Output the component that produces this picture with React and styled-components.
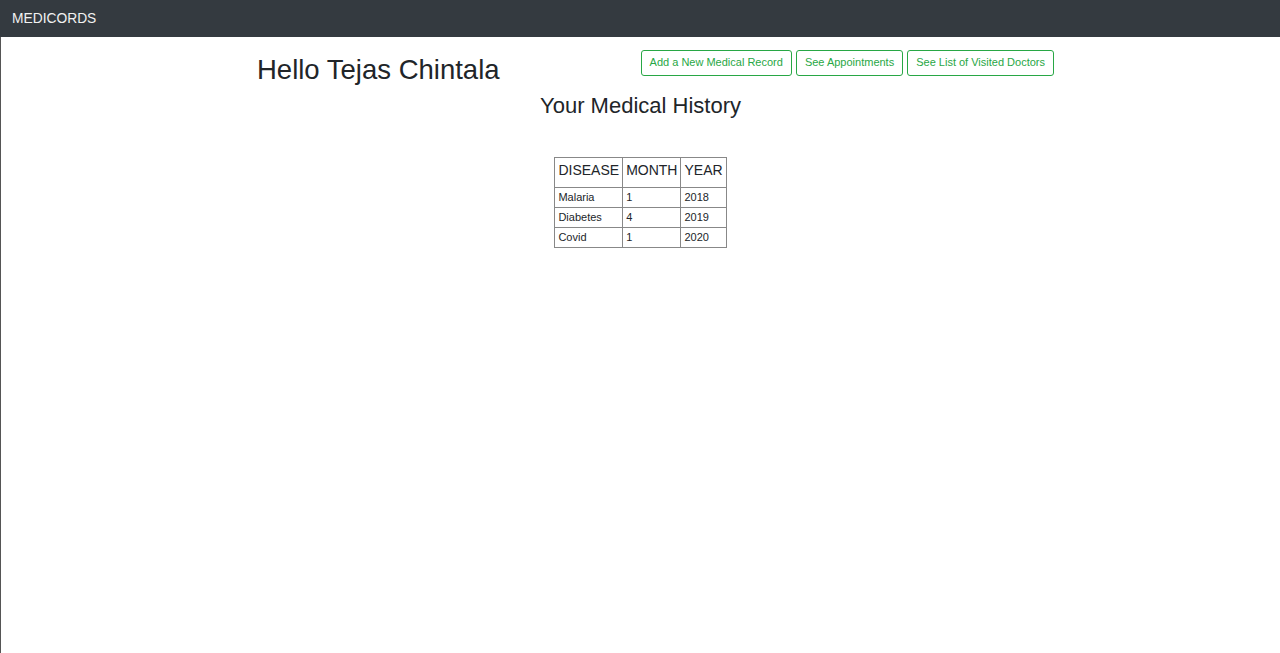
import React from 'react'
import styled, { createGlobalStyle } from 'styled-components'

const records = [
  { disease: 'Malaria', month: '1', year: '2018' },
  { disease: 'Diabetes', month: '4', year: '2019' },
  { disease: 'Covid', month: '1', year: '2020' },
]

const GlobalStyle = createGlobalStyle`
  body {
    margin: 0;
    font-family: "Liberation Sans", Arial, sans-serif;
    color: #212529;
    background: #fff;
  }
`

const Navbar = styled.nav`
  height: 37px;
  background: #343a40;
  display: flex;
  align-items: center;
  padding-left: 12px;
  color: #f1f1f1;
  font-size: 13.8px;
`

const Page = styled.main`
  min-height: 616px;
  border-left: 1px solid #555;
  box-sizing: border-box;
`

const TopRow = styled.div`
  display: flex;
  justify-content: space-between;
  align-items: flex-start;
  padding: 13px 226px 0 256px;
`

const Greeting = styled.h2`
  margin: 0;
  padding-top: 3px;
  font-size: 27.5px;
  font-weight: 400;
  line-height: 34px;
`

const ButtonGroup = styled.div`
  display: flex;
  gap: 4px;
`

const Button = styled.button`
  font-family: "Liberation Sans", Arial, sans-serif;
  font-size: 11px;
  color: #28a745;
  background: #fff;
  border: 1px solid #28a745;
  border-radius: 3px;
  height: 26px;
  padding: 0 8px 2px;
  cursor: pointer;
`

const Title = styled.h3`
  margin: 6px 0 0;
  text-align: center;
  font-size: 22px;
  font-weight: 400;
  line-height: 26px;
`

const TableWrap = styled.div`
  display: flex;
  justify-content: center;
  margin-top: 38px;
`

const Table = styled.table`
  border-collapse: collapse;
  border: 1px solid #666;
`

const HeadCell = styled.th`
  border: 1px solid #888;
  font-size: 14px;
  font-weight: 400;
  text-align: left;
  padding: 0 3px 5px;
  height: 24px;
`

const Cell = styled.td`
  border: 1px solid #888;
  font-size: 11px;
  padding: 0 3px 1px;
  height: 18px;
`

const App = () =>
  <>
    <GlobalStyle />
    <Navbar>MEDICORDS</Navbar>
    <Page>
      <TopRow>
        <Greeting>Hello Tejas Chintala</Greeting>
        <ButtonGroup>
          <Button>Add a New Medical Record</Button>
          <Button>See Appointments</Button>
          <Button>See List of Visited Doctors</Button>
        </ButtonGroup>
      </TopRow>
      <Title>Your Medical History</Title>
      <TableWrap>
        <Table>
          <thead>
            <tr>
              <HeadCell>DISEASE</HeadCell>
              <HeadCell>MONTH</HeadCell>
              <HeadCell>YEAR</HeadCell>
            </tr>
          </thead>
          <tbody>
            {records.map((r, i) =>
              <tr key={i}>
                <Cell>{r.disease}</Cell>
                <Cell>{r.month}</Cell>
                <Cell>{r.year}</Cell>
              </tr>
            )}
          </tbody>
        </Table>
      </TableWrap>
    </Page>
  </>

export default App
